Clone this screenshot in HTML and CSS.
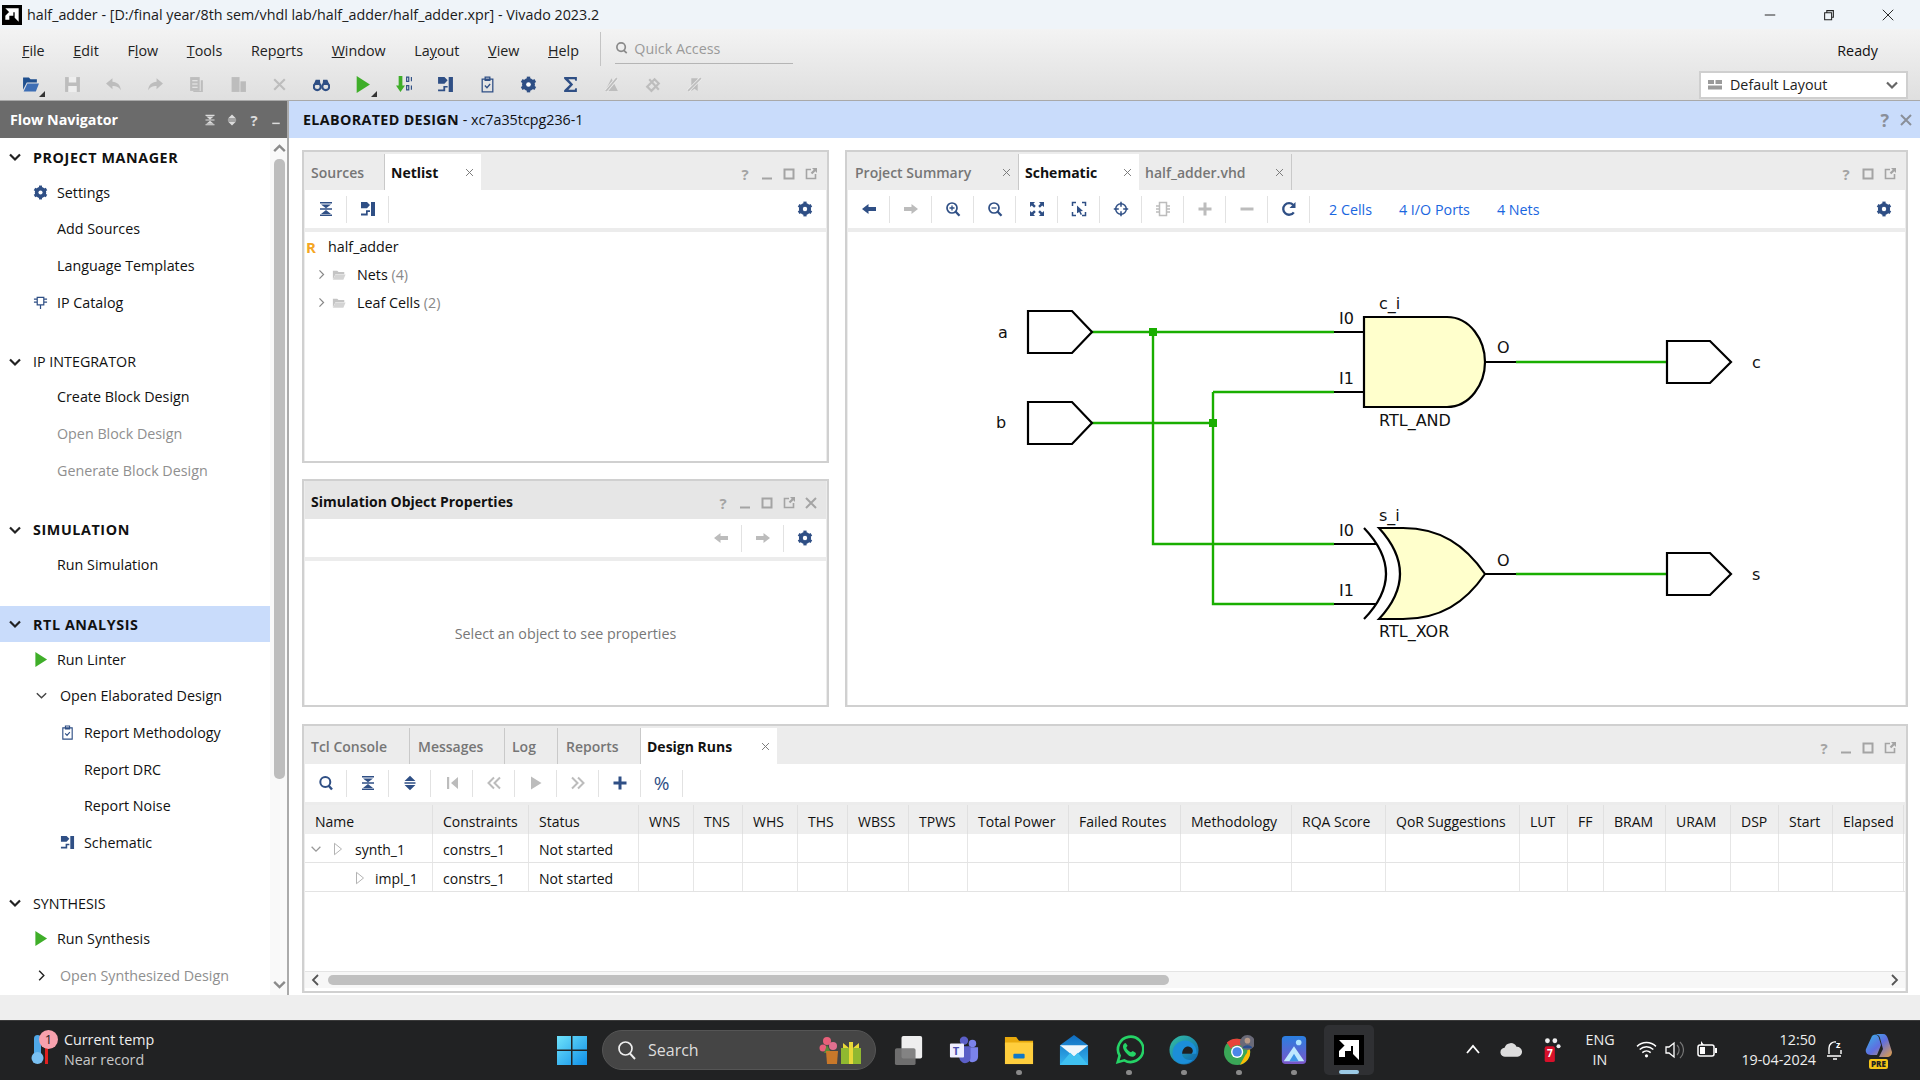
FILE: index.html
```html
<!DOCTYPE html>
<html lang="en">
<head>
<meta charset="utf-8">
<title>half_adder - Vivado 2023.2</title>
<link rel="stylesheet" href="styles.css">
</head>
<body>
<svg class="defs" width="0" height="0">
  <defs>
    <linearGradient id="gWin" x1="0" y1="0" x2="1" y2="1"><stop offset="0" stop-color="#6fe3fb"/><stop offset="1" stop-color="#0f8fe8"/></linearGradient>
    <linearGradient id="gEdge" x1="0" y1="0" x2="1" y2="1"><stop offset="0" stop-color="#35c1a0"/><stop offset="1" stop-color="#0a5fb4"/></linearGradient>
    <linearGradient id="gPhoto" x1="0" y1="0" x2="0" y2="1"><stop offset="0" stop-color="#2a7fe0"/><stop offset="1" stop-color="#7a55c8"/></linearGradient>
    <linearGradient id="gMail" x1="0" y1="0" x2="0" y2="1"><stop offset="0" stop-color="#0f6cc0"/><stop offset="1" stop-color="#35b4ee"/></linearGradient>
    <linearGradient id="gCop" x1="0" y1="0" x2="1" y2="1"><stop offset="0" stop-color="#35b7e8"/><stop offset=".5" stop-color="#5f6ee0"/><stop offset="1" stop-color="#e8a040"/></linearGradient>
  </defs>
  <symbol id="gear" viewBox="0 0 16 16"><circle cx="8" cy="8" r="4.4" fill="none" stroke="currentColor" stroke-width="3.4"/><g fill="currentColor"><rect x="6.4" y=".6" width="3.2" height="14.8"/><rect x="6.4" y=".6" width="3.2" height="14.8" transform="rotate(60 8 8)"/><rect x="6.4" y=".6" width="3.2" height="14.8" transform="rotate(120 8 8)"/></g><circle cx="8" cy="8" r="2.2" fill="#fff"/></symbol>
  <symbol id="collapse" viewBox="0 0 16 16"><path fill="currentColor" d="M2 1h12v1.5H2zM3 3.4h10L8 7.2zM2 7.3h12v1.4H2zM8 9l5 4H3zM2 13.6h12V15H2z"/></symbol>
  <symbol id="expand" viewBox="0 0 16 16"><path fill="currentColor" d="M8 .8l5.4 5.2H2.600zM2.500 7.300h11v1.400h-11zM2.600 10h10.800L8 15.200z"/></symbol>
  <symbol id="schem" viewBox="0 0 16 16"><path fill="currentColor" d="M1 1h6l3 3-3 3.300H1zM11 1h4v14h-4zM1 12.600h5V9.300h4v1.600H7.700V14.400H1z"/></symbol>
  <symbol id="left" viewBox="0 0 16 16"><path fill="currentColor" d="M1 8l6.500-5v3H15v4H7.500v3z"/></symbol>
  <symbol id="right" viewBox="0 0 16 16"><path fill="currentColor" d="M15 8L8.500 3v3H1v4h7.500v3z"/></symbol>
  <symbol id="zoomin" viewBox="0 0 16 16"><circle cx="7" cy="7" r="5" fill="none" stroke="currentColor" stroke-width="1.700"/><path stroke="currentColor" stroke-width="2.200" d="M10.500 10.500l4 4.300"/><path stroke="currentColor" stroke-width="1.300" d="M4.500 7h5M7 4.500v5"/></symbol>
  <symbol id="zoomout" viewBox="0 0 16 16"><circle cx="7" cy="7" r="5" fill="none" stroke="currentColor" stroke-width="1.700"/><path stroke="currentColor" stroke-width="2.200" d="M10.500 10.500l4 4.300"/><path stroke="currentColor" stroke-width="1.300" d="M4.500 7h5"/></symbol>
  <symbol id="search" viewBox="0 0 16 16"><circle cx="7.300" cy="7" r="5" fill="none" stroke="currentColor" stroke-width="2"/><path stroke="currentColor" stroke-width="2.400" d="M10.500 10.500l3.500 4"/></symbol>
  <symbol id="fit" viewBox="0 0 16 16"><path fill="currentColor" d="M1 1h5L4.500 2.800l2.300 2.300-1.700 1.700-2.300-2.300L1 6zM15 1v5l-1.800-1.500-2.300 2.300-1.700-1.700 2.300-2.300L10 1zM1 15v-5l1.800 1.500 2.300-2.300 1.700 1.700-2.300 2.300L6 15zM15 15h-5l1.500-1.800-2.300-2.300 1.700-1.700 2.300 2.300L15 10z"/></symbol>
  <symbol id="fitsel" viewBox="0 0 16 16"><path fill="none" stroke="currentColor" stroke-width="1.500" d="M5 1.500H1.500V5M11 1.500h3.500V5M5 14.500H1.500V11M11 14.500h3.500V11"/><path fill="currentColor" d="M6 4.500l6 5.500-2.500.3 1.500 3-1.300.6-1.500-3L6 12.300z"/></symbol>
  <symbol id="target" viewBox="0 0 16 16"><circle cx="8" cy="8" r="5.300" fill="none" stroke="currentColor" stroke-width="1.500"/><path stroke="currentColor" stroke-width="1.500" d="M8 .8v5M8 10.200v5M.8 8h5M10.200 8h5"/></symbol>
  <symbol id="chip" viewBox="0 0 16 16"><path fill="none" stroke="currentColor" stroke-width="1.300" d="M4.500 2.500h7v8h-7zM8 10.500V15M1 4.500h3.500M1 7.500h3.500M11.500 4.500H15M11.500 7.500H15"/></symbol>
  <symbol id="chipv" viewBox="0 0 16 16"><path fill="none" stroke="currentColor" stroke-width="1.500" d="M4.500 1.500h7v13h-7zM1 5h3.500M1 8h3.500M1 11h3.500M11.500 5H15M11.500 8H15M11.500 11H15"/></symbol>
  <symbol id="plus" viewBox="0 0 16 16"><path fill="currentColor" d="M6.500 1.500h3v5h5v3h-5v5h-3v-5h-5v-3h5z"/></symbol>
  <symbol id="minus" viewBox="0 0 16 16"><path fill="currentColor" d="M1.500 6.500h13v3h-13z"/></symbol>
  <symbol id="refresh" viewBox="0 0 16 16"><path fill="none" stroke="currentColor" stroke-width="2.300" d="M12.800 11.300A5.800 5.800 0 1 1 12.300 4"/><path fill="currentColor" d="M14.500 1v6h-6z"/></symbol>
  <symbol id="first" viewBox="0 0 16 16"><path fill="currentColor" d="M3 2h2.200v12H3zM14 2v12L7 8z"/></symbol>
  <symbol id="prev2" viewBox="0 0 16 16"><path fill="none" stroke="currentColor" stroke-width="2" d="M8 2.500L2.500 8 8 13.500M14 2.500L8.500 8l5.500 5.500"/></symbol>
  <symbol id="next2" viewBox="0 0 16 16"><path fill="none" stroke="currentColor" stroke-width="2" d="M2 2.500L7.500 8 2 13.500M8 2.500L13.500 8 8 13.500"/></symbol>
  <symbol id="next" viewBox="0 0 16 16"><path fill="currentColor" d="M3 1.500v13L13.500 8z"/></symbol>
  <symbol id="play" viewBox="0 0 16 16"><path fill="#3fae29" d="M2.500 0v16L15 8z"/></symbol>
  <symbol id="clip" viewBox="0 0 16 16"><path fill="none" stroke="currentColor" stroke-width="1.200" d="M3 3h10v12H3zM5.800 1h4.400v3.200H5.800zM5.500 9l2 2 3-3.500"/></symbol>
  <symbol id="chevd" viewBox="0 0 16 16"><path fill="none" stroke="currentColor" stroke-width="1.500" d="M3 5.500l5 5 5-5"/></symbol>
  <symbol id="chevr" viewBox="0 0 16 16"><path fill="none" stroke="currentColor" stroke-width="1.500" d="M5.500 3l5 5-5 5"/></symbol>
  <symbol id="chevdb" viewBox="0 0 16 16"><path fill="none" stroke="currentColor" stroke-width="2.200" d="M3 5.500l5 5 5-5"/></symbol>
  <symbol id="chevu" viewBox="0 0 16 16"><path fill="none" stroke="currentColor" stroke-width="2.200" d="M3 10.500l5-5 5 5"/></symbol>
  <symbol id="close" viewBox="0 0 16 16"><path fill="none" stroke="currentColor" stroke-width="1.400" d="M3 3l10 10M13 3L3 13"/></symbol>
  <symbol id="closeb" viewBox="0 0 16 16"><path fill="none" stroke="currentColor" stroke-width="2" d="M3 3l10 10M13 3L3 13"/></symbol>
  <symbol id="pmin" viewBox="0 0 16 16"><path fill="currentColor" d="M3 11.500h10v2H3z"/></symbol>
  <symbol id="pmax" viewBox="0 0 16 16"><path fill="none" stroke="currentColor" stroke-width="2" d="M3.500 3.500h9v9h-9z"/></symbol>
  <symbol id="pflo" viewBox="0 0 16 16"><path fill="none" stroke="currentColor" stroke-width="1.600" d="M8 3.500H3.500v9h9V8"/><path fill="currentColor" d="M9 2h5v5l-1.700-1.700-3 3-1.600-1.600 3-3z"/></symbol>
  <symbol id="folder" viewBox="0 0 16 16"><path fill="#c4c4c4" d="M1 3h5l1.500 1.500H14V7H4L1 13z"/><path fill="#d4d4d4" d="M4 7.500h11.500L13 13.500H1z"/></symbol>
  <symbol id="tri" viewBox="0 0 16 16"><path fill="#fff" stroke="#a8a8a8" d="M4 1.500v13L12 8z"/></symbol>
  <symbol id="open" viewBox="0 0 16 16"><path fill="#1f4f8e" d="M1 1.500h5.500L8 3h6v3H4.500L1 13z"/><path fill="#3d6eb5" d="M5 7h11l-3 7.500H1.500z"/></symbol>
  <symbol id="save" viewBox="0 0 16 16"><path fill="currentColor" d="M1 1h14v14H1z"/><path fill="#eee" d="M4.500 1h7v5h-7zM4 9.500h8V15H4z"/></symbol>
  <symbol id="undo" viewBox="0 0 16 16"><path fill="currentColor" d="M1 7l6-5v3.300c4.500.2 7.500 3 8 8.200-2-3-4-4-8-4V12.500z"/></symbol>
  <symbol id="redo" viewBox="0 0 16 16"><path fill="currentColor" d="M15 7L9 2v3.300C4.500 5.500 1.500 8.300 1 13.500c2-3 4-4 8-4V12.500z"/></symbol>
  <symbol id="copy" viewBox="0 0 16 16"><path fill="currentColor" d="M2 1h9v13H2z"/><path fill="#eee" d="M4 4h5v1H4zM4 7h5v1H4zM4 10h5v1H4z"/><path fill="currentColor" d="M12 4h2v11H5v-1h7z"/></symbol>
  <symbol id="paste" viewBox="0 0 16 16"><path fill="currentColor" d="M1.500 1H9v14H1.500z"/><path fill="#bbb" d="M9.800 5H15v10H9.800z"/></symbol>
  <symbol id="bino" viewBox="0 0 16 16"><circle cx="4" cy="10" r="3.300" fill="none" stroke="currentColor" stroke-width="2"/><circle cx="12" cy="10" r="3.300" fill="none" stroke="currentColor" stroke-width="2"/><path fill="currentColor" d="M2.500 3.500h4l.5 5h2l.5-5h4l2 5H.5z"/></symbol>
  <symbol id="bits" viewBox="0 0 16 16"><path fill="#3fae29" d="M2.500 0h3.500v9h2.500L4.200 15 0 9h2.500z"/><path fill="none" stroke="#2f4f85" stroke-width="1.100" d="M10 1h2v4h-2zM14.500 1v4M10 9h2v4h-2zM14.500 9v4"/></symbol>
  <symbol id="sigma" viewBox="0 0 16 16"><path fill="currentColor" d="M2 1h12v3.500h-1.500L12 3H6l4.500 5L6 13h6l.5-1.500H14V15H2v-1.500L7.500 8 2 2.500z"/></symbol>
  <symbol id="x1" viewBox="0 0 16 16"><path fill="currentColor" d="M2 14L8 2l6 12zM2 15h12"/><path stroke="#eee" stroke-width="3" d="M3 14L13 2"/><path stroke="currentColor" stroke-width="1.500" d="M3 14L13 2"/></symbol>
  <symbol id="x2" viewBox="0 0 16 16"><path fill="none" stroke="currentColor" stroke-width="2" d="M5 13l-3-3 7-7 4 4-7 7zM4 3l9 10"/></symbol>
  <symbol id="x3" viewBox="0 0 16 16"><path fill="currentColor" d="M5 2h6v12l-3-2-3 2z"/><path stroke="#eee" stroke-width="3" d="M2 14L14 2"/><path stroke="currentColor" stroke-width="1.500" d="M2 14L14 2"/></symbol>
  <symbol id="layout" viewBox="0 0 16 16"><path fill="#9a9a9a" d="M1 3h6v4H1zM8.500 3H15v4H8.500zM1 8.500h14v4H1z"/></symbol>
  <symbol id="amd" viewBox="0 0 30 30"><path fill="#000" d="M0 0h30v30H0z"/><path fill="#fff" d="M5 5h20v20l-6-6v-8H11zM5 16l6-6h6v6h-6v6H5z"/></symbol>
</svg>

<header class="head-title">
  <svg class="app-logo"><use href="#amd"/></svg>
  <span class="title-text">half_adder - [D:/final year/8th sem/vhdl lab/half_adder/half_adder.xpr] - Vivado 2023.2</span>
  <div class="win-ctl">
    <svg class="wc" viewBox="0 0 16 16"><path stroke="#222" stroke-width="1.100" d="M2 8h12"/></svg>
    <svg class="wc" viewBox="0 0 16 16"><path fill="none" stroke="#222" stroke-width="1.200" d="M3 5.500h8v8H3zM5.500 5V3h7.500v7.500H11.500"/></svg>
    <svg class="wc" viewBox="0 0 16 16"><path stroke="#222" stroke-width="1.100" d="M2 2l12 12M14 2L2 14"/></svg>
  </div>
</header>

<div class="head-tools">
  <nav class="menubar">
    <span class="menu"><u>F</u>ile</span><span class="menu"><u>E</u>dit</span><span class="menu">F<u>l</u>ow</span><span class="menu"><u>T</u>ools</span><span class="menu">Rep<u>o</u>rts</span><span class="menu"><u>W</u>indow</span><span class="menu">La<u>y</u>out</span><span class="menu"><u>V</u>iew</span><span class="menu"><u>H</u>elp</span>
    <span class="menu-sep"></span>
    <div class="quick"><svg class="qi" viewBox="0 0 16 16"><circle cx="6.500" cy="6.500" r="4.500" fill="none" stroke="#8a8a8a" stroke-width="1.800"/><path stroke="#8a8a8a" stroke-width="1.800" d="M9.500 10l3 3"/></svg><span>Quick Access</span></div>
    <span class="ready">Ready</span>
  </nav>
  <div class="toolbar-main">
    <span class="mt navy corner"><svg class="i17"><use href="#open"/></svg></span>
    <span class="mt off"><svg class="i17"><use href="#save"/></svg></span>
    <span class="mt off"><svg class="i17"><use href="#undo"/></svg></span>
    <span class="mt off"><svg class="i17"><use href="#redo"/></svg></span>
    <span class="mt off"><svg class="i17"><use href="#copy"/></svg></span>
    <span class="mt off"><svg class="i17"><use href="#paste"/></svg></span>
    <span class="mt off"><svg class="i17"><use href="#closeb"/></svg></span>
    <span class="mt navy"><svg class="i17"><use href="#bino"/></svg></span>
    <span class="mt corner"><svg class="i17"><use href="#play"/></svg></span>
    <span class="mt navy"><svg class="i17"><use href="#bits"/></svg></span>
    <span class="mt navy"><svg class="i17"><use href="#schem"/></svg></span>
    <span class="mt navy"><svg class="i17"><use href="#clip"/></svg></span>
    <span class="mt navy"><svg class="i17"><use href="#gear"/></svg></span>
    <span class="mt navy"><svg class="i17"><use href="#sigma"/></svg></span>
    <span class="mt off"><svg class="i17"><use href="#x1"/></svg></span>
    <span class="mt off"><svg class="i17"><use href="#x2"/></svg></span>
    <span class="mt off"><svg class="i17"><use href="#x3"/></svg></span>
    <div class="layout-select"><svg class="i16"><use href="#layout"/></svg><span class="layout-name">Default Layout</span><svg class="i16 sel-chev"><use href="#chevdb"/></svg></div>
  </div>
</div>

<main class="main">
  <aside class="flownav">
    <div class="fn-head">
      <span class="fn-title">Flow Navigator</span>
      <span class="fn-icons"><svg class="i12"><use href="#collapse"/></svg><svg class="i12"><use href="#expand"/></svg><b class="q">?</b><svg class="i12"><use href="#pmin"/></svg></span>
    </div>
    <div class="fn-body">
      <div class="fn-list">
        <section class="sec first">
          <div class="sh strong"><svg class="shc"><use href="#chevdb"/></svg>PROJECT MANAGER</div>
          <div class="it"><svg class="iti navy"><use href="#gear"/></svg>Settings</div>
          <div class="it"><span class="iti"></span>Add Sources</div>
          <div class="it"><span class="iti"></span>Language Templates</div>
          <div class="it"><svg class="iti navy"><use href="#chip"/></svg>IP Catalog</div>
        </section>
        <section class="sec">
          <div class="sh"><svg class="shc"><use href="#chevdb"/></svg>IP INTEGRATOR</div>
          <div class="it"><span class="iti"></span>Create Block Design</div>
          <div class="it dis"><span class="iti"></span>Open Block Design</div>
          <div class="it dis"><span class="iti"></span>Generate Block Design</div>
        </section>
        <section class="sec">
          <div class="sh strong"><svg class="shc"><use href="#chevdb"/></svg>SIMULATION</div>
          <div class="it"><span class="iti"></span>Run Simulation</div>
        </section>
        <section class="sec tight">
          <div class="sh strong active"><svg class="shc"><use href="#chevdb"/></svg>RTL ANALYSIS</div>
          <div class="it"><svg class="iti"><use href="#play"/></svg>Run Linter</div>
          <div class="it sub"><svg class="subc"><use href="#chevd"/></svg>Open Elaborated Design</div>
          <div class="it deep"><svg class="iti navy"><use href="#clip"/></svg>Report Methodology</div>
          <div class="it deep"><span class="iti"></span>Report DRC</div>
          <div class="it deep"><span class="iti"></span>Report Noise</div>
          <div class="it deep"><svg class="iti navy"><use href="#schem"/></svg>Schematic</div>
        </section>
        <section class="sec after-tight">
          <div class="sh"><svg class="shc"><use href="#chevdb"/></svg>SYNTHESIS</div>
          <div class="it"><svg class="iti"><use href="#play"/></svg>Run Synthesis</div>
          <div class="it sub dis"><svg class="subc dark"><use href="#chevr"/></svg>Open Synthesized Design</div>
        </section>
      </div>
      <div class="vscroll">
        <svg class="sb-arrow"><use href="#chevu"/></svg>
        <div class="vtrack"><div class="vthumb"></div></div>
        <svg class="sb-arrow"><use href="#chevdb"/></svg>
      </div>
    </div>
  </aside>

  <div class="right">
    <div class="banner">
      <span><b class="banner-b">ELABORATED DESIGN</b> - xc7a35tcpg236-1</span>
      <span class="banner-icons"><b class="q">?</b><svg class="i16"><use href="#closeb"/></svg></span>
    </div>
    <div class="workspace">
      <div class="upper">
        <div class="leftcol">
          <section class="panel p-netlist">
            <div class="tabbar">
              <span class="tab t-sources">Sources</span>
              <span class="tab active t-netlist">Netlist<svg class="tabx"><use href="#close"/></svg></span>
              <span class="pctl"><b class="q">?</b><svg class="i16"><use href="#pmin"/></svg><svg class="i16"><use href="#pmax"/></svg><svg class="i16"><use href="#pflo"/></svg></span>
            </div>
            <div class="tools">
              <span class="tool"><svg class="i16"><use href="#collapse"/></svg></span>
              <span class="tool"><svg class="i16"><use href="#schem"/></svg></span>
              <span class="tool-gear"><svg class="i16"><use href="#gear"/></svg></span>
            </div>
            <div class="content tree">
              <div class="tr root"><b class="r">R</b>half_adder</div>
              <div class="tr"><svg class="trc"><use href="#chevr"/></svg><svg class="trf"><use href="#folder"/></svg>Nets&nbsp;<span class="cnt">(4)</span></div>
              <div class="tr"><svg class="trc"><use href="#chevr"/></svg><svg class="trf"><use href="#folder"/></svg>Leaf Cells&nbsp;<span class="cnt">(2)</span></div>
            </div>
          </section>
          <section class="panel p-sim">
            <div class="tabbar plain">
              <span class="plain-title">Simulation Object Properties</span>
              <span class="pctl"><b class="q">?</b><svg class="i16"><use href="#pmin"/></svg><svg class="i16"><use href="#pmax"/></svg><svg class="i16"><use href="#pflo"/></svg><svg class="i16"><use href="#closeb"/></svg></span>
            </div>
            <div class="tools tools-end">
              <span class="tool off"><svg class="i16"><use href="#left"/></svg></span>
              <span class="tool off"><svg class="i16"><use href="#right"/></svg></span>
              <span class="tool-gear flat"><svg class="i16"><use href="#gear"/></svg></span>
            </div>
            <div class="content empty">Select an object to see properties</div>
          </section>
        </div>

        <section class="panel p-schem">
          <div class="tabbar">
            <span class="tab t-summary">Project Summary<svg class="tabx"><use href="#close"/></svg></span>
            <span class="tab active t-schem">Schematic<svg class="tabx"><use href="#close"/></svg></span>
            <span class="tab t-vhd">half_adder.vhd<svg class="tabx"><use href="#close"/></svg></span>
            <span class="pctl"><b class="q">?</b><svg class="i16"><use href="#pmax"/></svg><svg class="i16"><use href="#pflo"/></svg></span>
          </div>
          <div class="tools">
            <span class="tool"><svg class="i16"><use href="#left"/></svg></span>
            <span class="tool off"><svg class="i16"><use href="#right"/></svg></span>
            <span class="tool"><svg class="i16"><use href="#zoomin"/></svg></span>
            <span class="tool"><svg class="i16"><use href="#zoomout"/></svg></span>
            <span class="tool"><svg class="i16"><use href="#fit"/></svg></span>
            <span class="tool"><svg class="i16"><use href="#fitsel"/></svg></span>
            <span class="tool"><svg class="i16"><use href="#target"/></svg></span>
            <span class="tool off"><svg class="i16"><use href="#chipv"/></svg></span>
            <span class="tool off"><svg class="i16"><use href="#plus"/></svg></span>
            <span class="tool off"><svg class="i16"><use href="#minus"/></svg></span>
            <span class="tool"><svg class="i16"><use href="#refresh"/></svg></span>
            <span class="links"><a>2 Cells</a><a>4 I/O Ports</a><a>4 Nets</a></span>
            <span class="tool-gear"><svg class="i16"><use href="#gear"/></svg></span>
          </div>
          <div class="content canvas">
            <svg class="schematic" viewBox="848 232 1057 473">
              <g class="wires">
                <path d="M1092 332H1334M1153 332V544H1334M1092 423H1213M1213 392V604H1334M1213 392H1334M1516 362H1667M1516 574H1667"/>
              </g>
              <path class="dot" d="M1149 328h8v8h-8zM1209 419h8v8h-8z"/>
              <g class="stubs">
                <path d="M1334 332h30M1334 392h30M1334 544h43M1334 604h43M1485 362h31M1485 574h31"/>
                <path d="M1364 528Q1408 574 1364 619"/>
                <path d="M1028 311h44l20 21-20 21h-44zM1028 402h44l20 21-20 21h-44zM1667 341h43l21 21-21 21h-43zM1667 553h43l21 21-21 21h-43z"/>
              </g>
              <path class="gate" d="M1364 317H1447C1470 317 1485 340 1485 362C1485 384 1470 407 1447 407H1364Z"/>
              <path class="gate" d="M1379 528H1403C1440 528 1465 545 1485 574C1465 603 1440 619 1403 619H1379Q1421 574 1379 528Z"/>
              <text class="sl" x="998" y="338">a</text>
              <text class="sl" x="996" y="428">b</text>
              <text class="sl" x="1752" y="368">c</text>
              <text class="sl" x="1752" y="580">s</text>
              <text class="sl" x="1339" y="324">I0</text>
              <text class="sl" x="1339" y="384">I1</text>
              <text class="sl" x="1339" y="536">I0</text>
              <text class="sl" x="1339" y="596">I1</text>
              <text class="sl" x="1379" y="309">c_i</text>
              <text class="sl" x="1379" y="521">s_i</text>
              <text class="sl" x="1497" y="353">O</text>
              <text class="sl" x="1497" y="566">O</text>
              <text class="sl" x="1379" y="426">RTL_AND</text>
              <text class="sl" x="1379" y="637">RTL_XOR</text>
            </svg>
          </div>
        </section>
      </div>

      <section class="panel p-runs">
        <div class="tabbar">
          <span class="tab t-tcl">Tcl Console</span>
          <span class="tab t-msg">Messages</span>
          <span class="tab t-log">Log</span>
          <span class="tab t-rep">Reports</span>
          <span class="tab active t-runs">Design Runs<svg class="tabx"><use href="#close"/></svg></span>
          <span class="pctl"><b class="q">?</b><svg class="i16"><use href="#pmin"/></svg><svg class="i16"><use href="#pmax"/></svg><svg class="i16"><use href="#pflo"/></svg></span>
        </div>
        <div class="tools">
          <span class="tool"><svg class="i16"><use href="#search"/></svg></span>
          <span class="tool"><svg class="i16"><use href="#collapse"/></svg></span>
          <span class="tool"><svg class="i16"><use href="#expand"/></svg></span>
          <span class="tool off"><svg class="i16"><use href="#first"/></svg></span>
          <span class="tool off"><svg class="i16"><use href="#prev2"/></svg></span>
          <span class="tool off"><svg class="i16"><use href="#next"/></svg></span>
          <span class="tool off"><svg class="i16"><use href="#next2"/></svg></span>
          <span class="tool"><svg class="i16"><use href="#plus"/></svg></span>
          <span class="tool pct">%</span>
        </div>
        <div class="content runs">
          <div class="trow thead"><span>Name</span><span>Constraints</span><span>Status</span><span>WNS</span><span>TNS</span><span>WHS</span><span>THS</span><span>WBSS</span><span>TPWS</span><span>Total Power</span><span>Failed Routes</span><span>Methodology</span><span>RQA Score</span><span>QoR Suggestions</span><span>LUT</span><span>FF</span><span>BRAM</span><span>URAM</span><span>DSP</span><span>Start</span><span>Elapsed</span></div>
          <div class="trow"><span class="nm"><svg class="rc"><use href="#chevd"/></svg><svg class="rt"><use href="#tri"/></svg>synth_1</span><span>constrs_1</span><span>Not started</span><span></span><span></span><span></span><span></span><span></span><span></span><span></span><span></span><span></span><span></span><span></span><span></span><span></span><span></span><span></span><span></span><span></span><span></span></div>
          <div class="trow"><span class="nm nm2"><svg class="rt"><use href="#tri"/></svg>impl_1</span><span>constrs_1</span><span>Not started</span><span></span><span></span><span></span><span></span><span></span><span></span><span></span><span></span><span></span><span></span><span></span><span></span><span></span><span></span><span></span><span></span><span></span><span></span></div>
          <div class="hscroll"><svg class="hs-arrow"><path fill="none" stroke="#555" stroke-width="1.800" d="M9 2L4 7l5 5"/></svg><div class="htrack"><div class="hthumb"></div></div><svg class="hs-arrow"><path fill="none" stroke="#555" stroke-width="1.800" d="M5 2l5 5-5 5"/></svg></div>
        </div>
      </section>
    </div>
  </div>
</main>

<div class="statusbar"></div>

<footer class="taskbar">
  <div class="weather">
    <svg class="th" viewBox="0 0 22 34"><rect x="4" y="2" width="7" height="23" rx="3.500" fill="#4fa8e8"/><circle cx="7.500" cy="25" r="6" fill="#79c0f2"/><rect x="15" y="12" width="3" height="19" fill="#e02020"/></svg>
    <span class="badge">1</span>
    <div class="wtext"><span>Current temp</span><span class="wsub">Near record</span></div>
  </div>
  <span class="tcell"><svg class="tb-win" viewBox="0 0 30 30"><path fill="url(#gWin)" d="M0 1h14v13.500H0zM15.500 1H30v13.500H15.500zM0 16h14v14H0zM15.500 16H30v14H15.500z"/></svg></span>
  <div class="searchbox">
    <svg class="si" viewBox="0 0 20 20"><circle cx="8.500" cy="8.500" r="6.500" fill="none" stroke="#eee" stroke-width="1.700"/><path stroke="#eee" stroke-width="1.900" d="M13 13.500l5 5.500"/></svg>
    <span class="stext">Search</span>
    <svg class="gift" viewBox="0 0 44 30"><circle cx="8" cy="6" r="4" fill="#e8607a"/><circle cx="14" cy="11" r="4" fill="#e07090"/><circle cx="4" cy="13" r="3.500" fill="#e8607a"/><path fill="#5a8a3a" d="M8 10l4 8H5z"/><path fill="#c8782a" d="M7 16h12l-1 13H8z"/><path fill="#90b830" d="M22 13h20v16H22z"/><path fill="#e8d838" d="M30 7h4v22h-4zM24 8l6 5h-6zM40 8l-6 5h6z"/></svg>
  </div>
  <span class="tcell tc-first"><svg class="tb-ic" viewBox="0 0 32 32"><rect x="8" y="1" width="22" height="24" rx="2" fill="#eee"/><rect x="1" y="14" width="22" height="18" rx="2" fill="#777" fill-opacity=".9"/></svg></span>
  <span class="tcell"><svg class="tb-ic" viewBox="0 0 32 32"><circle cx="25" cy="9" r="4" fill="#7b83eb"/><circle cx="16" cy="6" r="4.500" fill="#5b5fc7"/><path fill="#7b83eb" d="M21 13h10v10c0 4-3 6-6 6s-4-2-4-4z"/><path fill="#5b5fc7" d="M11 12h12v12c0 4-3 6-6 6s-6-3-6-6z"/><rect x="1" y="9" width="15" height="15" rx="1" fill="#eef"/><text class="tt" x="4" y="21">T</text></svg></span>
  <span class="tcell dot-on"><svg class="tb-ic" viewBox="0 0 32 32"><path fill="#e8a90c" d="M1 2h12l3 4h15v6H1z"/><path fill="#ffce3d" d="M1 8h30v23H1z"/><rect x="10" y="20" width="12" height="5" rx="1" fill="#0f78c8"/></svg></span>
  <span class="tcell"><svg class="tb-ic" viewBox="0 0 32 32"><path fill="url(#gMail)" d="M1 11L16 0l15 11v21H1z"/><path fill="#eef6fb" d="M1 11h30L16 23z"/><path fill="#3fc0f0" d="M1 32l11-13 4 4 4-4 11 13z"/></svg></span>
  <span class="tcell dot-on"><svg class="tb-ic" viewBox="0 0 32 32"><path fill="none" stroke="#25d366" stroke-width="2.800" d="M4 29l2-7a13.500 13.500 0 1 1 5 5z"/><path fill="#25d366" d="M11 9c-2 2-2 5 1 9s7 6 9 5 3-3 2-4l-3-2-2 1.500c-2-1-4-3-5-5l1.500-2-2-3z"/></svg></span>
  <span class="tcell dot-on"><svg class="tb-ic" viewBox="0 0 32 32"><circle cx="16" cy="16" r="15.500" fill="url(#gEdge)"/><path fill="#1c8ed8" d="M4 22C2 10 14 3 22 7c6 3 8 9 7 13H14c0 5 6 8 12 6-8 8-20 5-22-4z"/><path fill="#202020" d="M14 20c0-6 5-9 9-7 3 2 3 5 1 7z"/></svg></span>
  <span class="tcell dot-on"><svg class="tb-ic" viewBox="0 0 32 32"><circle cx="14" cy="18" r="14" fill="#3aa757"/><path fill="#e8443a" d="M14 4a14 14 0 0 1 12 7H14a7 7 0 0 0-6.500 4L3 8a14 14 0 0 1 11-4z"/><path fill="#fbbc05" d="M26 11a14 14 0 0 1-9 20.700l6-10.700a7 7 0 0 0 0-10z"/><circle cx="14" cy="18" r="6.500" fill="#fff"/><circle cx="14" cy="18" r="5" fill="#4a86e8"/><circle cx="25" cy="8" r="8" fill="#6a6a78"/><circle cx="25" cy="6" r="3" fill="#b89a88"/><path fill="#2a4f90" d="M20 14c0-4 10-4 10 0z"/></svg></span>
  <span class="tcell dot-on"><svg class="tb-ic" viewBox="0 0 28 32"><rect x="1" y="1" width="26" height="30" rx="4" fill="url(#gPhoto)"/><circle cx="19" cy="8" r="3" fill="#aee4ff"/><path fill="#bfe9ff" d="M3 28L14 12l11 16z"/><path fill="#3f95e6" d="M9 28l5-8 5 8z"/></svg></span>
  <span class="tcell tc-active"><svg class="tb-amd"><use href="#amd"/></svg><i class="ind"></i></span>
  <div class="tray">
    <svg class="tray-chev" viewBox="0 0 16 16"><path fill="none" stroke="#fff" stroke-width="1.800" d="M2 11l6-7 6 7"/></svg>
    <svg class="tray-cloud" viewBox="0 0 24 18"><path fill="#ddd" d="M6 17a5 5 0 0 1-1-10 7 7 0 0 1 13-1 5.500 5.500 0 0 1 1 11z"/></svg>
    <svg class="tray-red" viewBox="0 0 20 26"><circle cx="4" cy="3" r="2.600" fill="#eee"/><circle cx="12" cy="3" r="2.600" fill="#eee"/><circle cx="16" cy="9" r="2.200" fill="#eee"/><rect x="1" y="9" width="11" height="17" rx="2" fill="#d8102a"/><text class="tr7" x="3.500" y="21">7</text></svg>
    <div class="lang"><span>ENG</span><span>IN</span></div>
    <svg class="tray-wifi" viewBox="0 0 20 20"><path fill="none" stroke="#fff" stroke-width="1.400" d="M1 7a13 13 0 0 1 18 0M3.500 10a9.500 9.500 0 0 1 13 0M6 13a6 6 0 0 1 8 0"/><circle cx="10" cy="16" r="1.500" fill="#fff"/></svg>
    <svg class="tray-vol" viewBox="0 0 20 20"><path fill="none" stroke="#fff" stroke-width="1.300" d="M2 7h3l5-4v14l-5-4H2z"/><path fill="none" stroke="#777" stroke-width="1.200" d="M13 5a7 7 0 0 1 0 10M16 2a11 11 0 0 1 0 16"/></svg>
    <svg class="tray-bat" viewBox="0 0 22 20"><rect x="2" y="5" width="16" height="11" rx="2" fill="none" stroke="#fff" stroke-width="1.500"/><path fill="#fff" d="M19 8h2v5h-2zM4 7h5v7H4zM5 1l3 4H5z"/></svg>
    <div class="clock"><span>12:50</span><span>19-04-2024</span></div>
    <svg class="tray-bell" viewBox="0 0 20 24"><path fill="none" stroke="#fff" stroke-width="1.400" d="M4 16V10a6 6 0 0 1 7-6M2 18h14M8 21h4M16 12v4"/><text class="trz" x="11" y="10">z</text></svg>
    <div class="copilot"><svg class="cop-ic" viewBox="0 0 28 24"><path fill="url(#gCop)" d="M9 1h9c3 0 4 2 5 5l4 13c0 3-2 5-5 5h-8l4-8-3-11C14 2 12 1 9 1zM7 3c2-2 6-2 7 2l2 7-4 10H6c-4 0-6-3-5-6z"/></svg><span class="pre">PRE</span></div>
  </div>
</footer>
</body>
</html>
```

FILE: styles.css
```css
* { box-sizing: border-box; }
html, body { margin: 0; height: 100%; }
body {
  width: 1920px; height: 1080px; overflow: hidden;
  display: flex; flex-direction: column;
  font: 14.3px "Open Sans", "Noto Sans", sans-serif;
  color: #111; background: #fff;
}
.defs { flex: none; display: block; }
svg { display: block; flex: none; }
.i12 { width: 12px; height: 12px; }
.i16 { width: 16px; height: 16px; }
.i17 { width: 17px; height: 17px; }
.q { font: bold 15px "Open Sans", sans-serif; }

/* Title bar */
.head-title { height: 29px; flex: none; background: #eff4f9; display: flex; align-items: center; padding-left: 2px; }
.app-logo { width: 20px; height: 20px; }
.title-text { margin-left: 5px; color: #1a1a1a; }
.win-ctl { margin-left: auto; display: flex; }
.wc { width: 14px; height: 14px; margin-right: 45px; }
.wc:last-child { margin-right: 25px; }

/* Menu + toolbar */
.head-tools { height: 72px; flex: none; background: linear-gradient(#f3f3f3, #dfdfdf); border-bottom: 1px solid #a9a9a9; display: flex; flex-direction: column; }
.menubar { height: 41px; flex: none; display: flex; align-items: center; padding: 1px 42px 0 22px; gap: 28.7px; }
.menu { color: #222; }
.menu-sep { width: 1px; height: 34px; background: #c4c4c4; margin: -3px 0 0 -8px; }
.quick { display: flex; align-items: center; gap: 4px; width: 178px; height: 30px; margin: -2px 0 0 -14px; border-bottom: 1.500px solid #b5b5b5; color: #9a9a9a; }
.qi { width: 15px; height: 15px; }
.ready { margin-left: auto; }
.toolbar-main { height: 30px; flex: none; display: flex; align-items: center; padding: 0 12px 1px 10px; }
.mt { width: 41.500px; height: 27px; display: flex; align-items: center; justify-content: center; position: relative; }
.mt.navy { color: #2f4f85; }
.mt.off { color: #bdbdbd; }
.corner::after { content: ""; position: absolute; right: 7px; bottom: 1px; border: 3px solid transparent; border-right-color: #333; border-bottom-color: #333; }
.layout-select { margin-left: auto; width: 209px; height: 28px; background: #fff; border: 2px solid #cfcfcf; display: flex; align-items: center; padding: 0 6px; }
.layout-name { margin-left: 7px; color: #222; }
.sel-chev { margin-left: auto; color: #666; }

/* Main */
.main { height: 894px; flex: none; display: flex; }
.flownav { width: 289px; flex: none; display: flex; flex-direction: column; border-right: 2px solid #ababab; }
.fn-head { height: 37px; flex: none; background: #6b6b6b; color: #fff; display: flex; align-items: center; padding-left: 10px; }
.fn-title { font-weight: 700; }
.fn-icons { margin-left: auto; display: flex; align-items: center; gap: 10px; color: #dcdcdc; padding-right: 5px; }
.fn-icons .q { width: 12px; text-align: center; }
.fn-body { flex: 1; display: flex; min-height: 0; }
.fn-list { width: 270px; flex: none; overflow: hidden; padding-top: 2px; }
.sec { margin-top: 24px; }
.sec.first { margin-top: 0; }
.sec.tight { margin-top: 23px; }
.sec.after-tight { margin-top: 25.5px; }
.sh { height: 34px; display: flex; align-items: center; padding-left: 7px; color: #111; }
.sh.strong { font-weight: 700; letter-spacing: .6px; }
.sh.active { height: 36px; background: #c9dcfb; margin-bottom: -1.5px; }
.shc { width: 16px; height: 16px; margin-right: 10px; color: #222; }
.it { height: 36.670px; display: flex; align-items: center; padding-left: 33px; }
.iti { width: 15px; height: 15px; margin-right: 9px; color: inherit; }
.iti.navy { color: #2f4f85; }
.it.dis { color: #8f8f8f; }
.it.sub { padding-left: 34px; }
.subc { width: 15px; height: 15px; margin-right: 11px; color: #444; }
.subc.dark { color: #222; }
.it.deep { padding-left: 60px; }
.vscroll { width: 17px; flex: none; background: #f9f9f9; display: flex; flex-direction: column; align-items: center; padding-left: 1px; }
.sb-arrow { width: 17px; height: 17px; color: #8a8a8a; margin: 2px 0; }
.vtrack { flex: 1; width: 11px; }
.vthumb { height: 620px; background: #bdbdbd; border-radius: 5px; }

.right { flex: 1; min-width: 0; display: flex; flex-direction: column; }
.banner { height: 37px; flex: none; background: #c9dcfb; display: flex; align-items: center; padding: 0 6px 0 14px; }
.banner-b { letter-spacing: .35px; }
.banner-icons { margin-left: auto; display: flex; align-items: center; gap: 9px; color: #8a8f99; }
.banner-icons .q { font-size: 18px; }
.workspace { flex: 1; min-height: 0; padding: 12px 12px 2px 13px; display: flex; flex-direction: column; gap: 17px; }
.upper { height: 557px; flex: none; display: flex; gap: 16px; }
.leftcol { width: 527px; flex: none; display: flex; flex-direction: column; gap: 16px; }
.panel { border: 2px solid #d0d0d0; background: #ececec; padding: 0 1px; display: flex; flex-direction: column; min-height: 0; }
.p-netlist { height: 313px; flex: none; }
.p-sim { flex: 1; }
.p-schem { flex: 1; min-width: 0; }
.p-runs { flex: 1; }
.tabbar { height: 38px; flex: none; display: flex; align-items: flex-end; }
.tabbar.plain { background: #e6e6e6; align-items: center; padding-left: 6px; padding-top: 2px; }
.plain-title { font-weight: 700; font-size: 14px; }
.tab { height: 36px; display: flex; align-items: center; font-weight: 600; color: #767676; border-right: 1px solid #c9c9c9; padding-left: 6px; font-size: 14px; }
.tab.active { background: #fff; color: #111; font-weight: 700; border-right: 0; }
.tabx { width: 11px; height: 11px; margin-left: auto; margin-right: 6px; color: #777; }
.t-sources { width: 80px; }
.t-netlist { width: 96px; }
.t-summary { width: 171px; padding-left: 7px; }
.t-schem { width: 120px; }
.t-vhd { width: 153px; padding-left: 6px; }
.t-tcl { width: 105px; }
.t-msg { width: 95px; padding-left: 8px; }
.t-log { width: 53px; padding-left: 7px; }
.t-rep { width: 83px; padding-left: 8px; }
.t-runs { width: 136px; }
.pctl { margin-left: auto; align-self: center; display: flex; align-items: center; gap: 6px; color: #a4a4a4; padding: 5px 7px 0 0; }
.tabbar.plain .pctl { padding-top: 3px; }
.pctl .q { width: 16px; text-align: center; }
.tools { height: 38px; flex: none; background: #fff; display: flex; align-items: center; }
.tool { width: 42px; height: 27px; flex: none; display: flex; align-items: center; justify-content: center; border-right: 1px solid #e2e2e2; color: #2f4f85; }
.tool.off { color: #bcbcbc; }
.tool.pct { font-size: 19px; font-weight: 500; }
.tool-gear { margin-left: auto; width: 42px; display: flex; justify-content: center; color: #2f4f85; }
.tool-gear.flat { margin-left: 0; }
.tools-end { justify-content: flex-end; }
.links { display: flex; gap: 27px; padding-left: 19px; color: #1a66e0; }
.content { flex: 1; min-height: 0; margin-top: 4px; background: #fff; }
.tree { padding-top: 1px; }
.tr { height: 28px; display: flex; align-items: center; padding-left: 10px; }
.tr.root { padding-left: 1px; height: 27.5px; }
.r { color: #f5a623; width: 22px; font-size: 15px; }
.trc { width: 13px; height: 13px; margin-right: 4px; color: #888; }
.trf { width: 14px; height: 14px; margin-right: 11px; }
.cnt { color: #888; }
.empty { display: flex; align-items: center; justify-content: center; color: #777; }

/* Schematic */
.canvas { overflow: hidden; }
.schematic { width: 100%; height: 100%; }
.wires path { fill: none; stroke: #19ae00; stroke-width: 2.400; }
.dot { fill: #19ae00; }
.stubs path { fill: none; stroke: #000; stroke-width: 2.200; }
.gate { fill: #ffffcc; stroke: #000; stroke-width: 2.200; }
.sl { font: 16px "DejaVu Sans", sans-serif; fill: #111; }

/* Runs table */
.runs { display: flex; flex-direction: column; margin-top: 3px; }
.trow {
  display: grid; flex: none; height: 29px;
  grid-template-columns: 128px 96px 110px 55px 49px 55px 50px 61px 59px 101px 112px 111px 94px 134px 48px 36px 62px 65px 48px 54px 71px;
  border-bottom: 1px solid #e3e3e3;
}
.trow span { display: flex; align-items: center; padding: 2px 0 0 10px; border-right: 1px solid #e6e6e6; white-space: nowrap; font-size: 14px; }
.thead { background: #eeeeee; border-bottom: 0; }
.thead span { border-right-color: #e0e0e0; padding-top: 3px; }
.trow .nm { padding-left: 4px; }
.trow .nm2 { padding-left: 48px; }
.rc { width: 14px; height: 14px; color: #999; margin-right: 8px; }
.rt { width: 14px; height: 14px; margin-right: 10px; }
.nm2 .rt { margin-right: 8px; }
.hscroll { margin-top: auto; margin-bottom: 3px; height: 17px; flex: none; background: #f7f7f7; border-top: 1px solid #e4e4e4; display: flex; align-items: center; padding: 0 4px; }
.hs-arrow { width: 14px; height: 14px; }
.htrack { flex: 1; padding: 0 5px; }
.hthumb { width: 841px; height: 10px; background: #c0c0c0; border-radius: 5px; }

/* Status + taskbar */
.statusbar { height: 25px; flex: none; background: #eeeeee; }
.taskbar { height: 60px; flex: none; background: #212223; border-top: 1px solid #3a3a3a; display: flex; align-items: center; color: #eee; padding: 0 0 2px 30px; }
.weather { width: 514px; flex: none; display: flex; align-items: center; position: relative; }
.th { width: 22px; height: 34px; }
.badge { position: absolute; left: 9px; top: 0; width: 19px; height: 19px; border-radius: 50%; background: #f7a1ad; color: #222; font-size: 13px; display: flex; align-items: center; justify-content: center; }
.wtext { display: flex; flex-direction: column; margin-left: 12px; line-height: 20px; }
.wsub { color: #c8c8c8; }
.tcell { width: 55px; height: 50px; flex: none; display: flex; align-items: center; justify-content: center; position: relative; }
.tb-win { width: 30px; height: 30px; }
.searchbox { width: 274px; height: 40px; flex: none; margin-left: 3px; border-radius: 20px; background: #454545; border: 1px solid #555; display: flex; align-items: center; padding-left: 14px; }
.si { width: 20px; height: 20px; }
.stext { margin-left: 11px; font-size: 16px; color: #ddd; }
.gift { width: 44px; height: 30px; margin-left: auto; margin-right: 12px; }
.tc-first { margin-left: 5px; }
.tb-ic { width: 30px; height: 30px; }
.tt { font: bold 12px "Open Sans", sans-serif; fill: #4a4fb0; }
.dot-on::after { content: ""; position: absolute; left: 25px; bottom: 0; width: 6px; height: 5px; border-radius: 3px; background: #8a8a8a; }
.tc-active { background: #2f3033; border-radius: 5px; width: 50px; margin-left: 3px; }
.tb-amd { width: 30px; height: 30px; }
.ind { position: absolute; left: 15px; bottom: 1px; width: 20px; height: 4px; border-radius: 2px; background: #9ccbe6; }
.tray { display: flex; align-items: center; margin-left: 91px; flex: none; }
.tray-chev { width: 16px; height: 16px; }
.tray-cloud { width: 22px; height: 17px; margin-left: 19px; }
.tray-red { width: 20px; height: 24px; margin-left: 21px; }
.lang { display: flex; flex-direction: column; align-items: center; line-height: 20px; margin-left: 17px; width: 40px; }
.tray-wifi { width: 21px; height: 21px; margin-left: 16px; }
.tray-vol { width: 20px; height: 20px; margin-left: 7px; }
.tray-bat { width: 22px; height: 20px; margin-left: 12px; }
.clock { width: 78px; margin-left: 20px; display: flex; flex-direction: column; align-items: flex-end; line-height: 20px; }
.tray-bell { width: 20px; height: 24px; margin-left: 9px; }
.trz { font: bold 9px "Open Sans", sans-serif; fill: #fff; }
.tr7 { font: bold 11px "Open Sans", sans-serif; fill: #fff; }
.copilot { width: 30px; height: 38px; margin-left: 19px; display: flex; flex-direction: column; align-items: center; position: relative; }
.cop-ic { width: 28px; height: 28px; }
.pre { position: absolute; bottom: 0; left: 5px; background: #f5c518; color: #222; font-size: 8px; font-weight: 800; line-height: 10px; padding: 0 2px; border-radius: 2px; }
```
